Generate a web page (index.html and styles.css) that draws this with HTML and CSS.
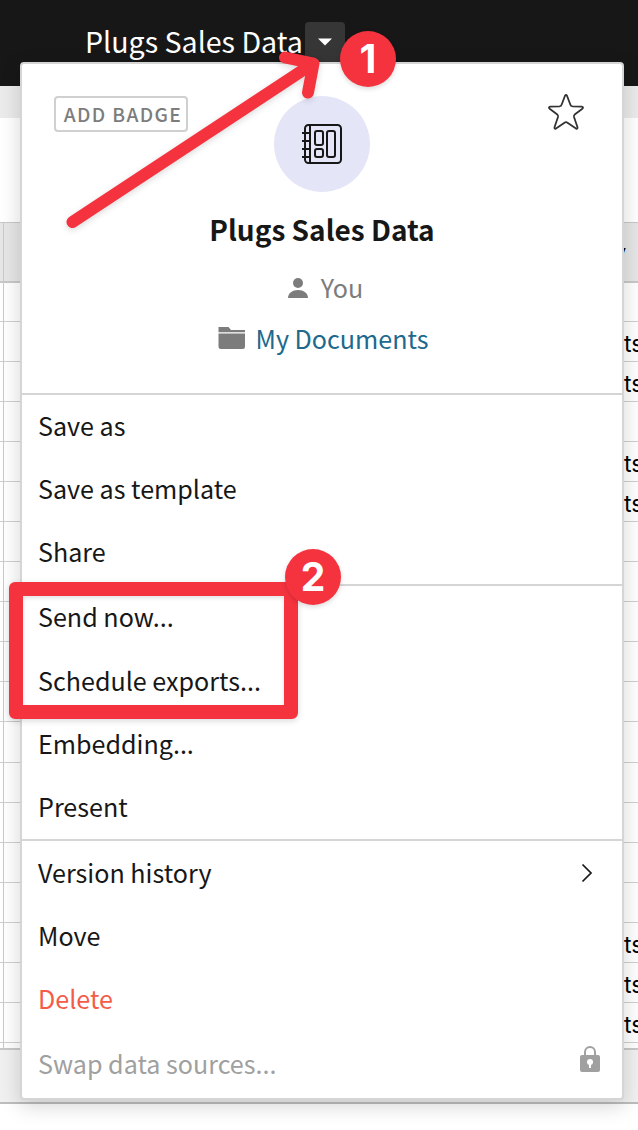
FILE: index.html
```html
<!DOCTYPE html>
<html lang="en">
<head>
<meta charset="utf-8">
<title>Plugs Sales Data</title>
<link rel="stylesheet" href="styles.css">
</head>
<body>
<div class="app">
  <header class="topbar">
    <span class="doc-name">Plugs Sales Data</span>
    <button class="caret" aria-label="Document menu"><svg width="14" height="8" viewBox="0 0 14 8"><path d="M0 .5h14L7 7.5z" fill="#fff"/></svg></button>
  </header>
  <div class="toolbar"></div>
  <div class="blank"></div>
  <div class="sheet">
    <div class="sheet-head"><span>y</span></div>
    <div class="row first"></div>
    <div class="row"><span>ts</span></div>
    <div class="row"><span>ts</span></div>
    <div class="row"></div>
    <div class="row"><span>ts</span></div>
    <div class="row"><span>ts</span></div>
    <div class="row"></div><div class="row"></div><div class="row"></div>
    <div class="row"></div><div class="row"></div><div class="row"></div>
    <div class="row"></div><div class="row"></div><div class="row"></div>
    <div class="row"></div>
    <div class="row"><span>ts</span></div>
    <div class="row"><span>ts</span></div>
    <div class="row"><span>ts</span></div>
  </div>
  <div class="sheet-foot"></div>
</div>

<section class="menu">
  <div class="summary">
    <div class="summary-top">
      <button class="badge">ADD BADGE</button>
      <div class="avatar">
        <svg width="42" height="42" viewBox="0 0 42 42" fill="none" stroke="#171717" stroke-width="2">
          <rect x="4" y="2" width="36" height="38" rx="3.5"/>
          <path d="M9 2v38M1 10h8M1 18h8M1 26h8M1 34h8"/>
          <rect x="14" y="8" width="8" height="14" rx="2"/>
          <rect x="14" y="26" width="8" height="8" rx="2"/>
          <rect x="26" y="8" width="8" height="26" rx="2"/>
        </svg>
      </div>
      <svg class="star" width="38" height="38" viewBox="0 0 38 38" fill="none" stroke="#333" stroke-width="1.800" stroke-linejoin="round"><path d="M18 2.800Q19 1.200 20 2.800L23.300 11.500Q23.800 13.300 25.500 13.400L34.700 13.700Q37 14.200 35.400 15.700L28 21.300Q26.600 22.400 27 24L30.500 34.300Q30.700 36.200 29 35.600L20.500 29.700Q19 28.700 17.500 29.700L9 35.600Q7.300 36.200 7.500 34.300L11 24Q11.400 22.400 10 21.300L2.600 15.700Q1 14.200 3.300 13.700L12.500 13.400Q14.200 13.300 14.700 11.500Z"/></svg>
    </div>
    <h1 class="name">Plugs Sales Data</h1>
    <div class="owner">
      <svg class="person" width="20" height="20" viewBox="0 0 20 20" fill="#7c7c7c"><circle cx="10" cy="5" r="5"/><path d="M0 20c0-5 4.500-8 10-8s10 3 10 8z"/></svg>
      <span>You</span>
    </div>
    <div class="folder">
      <svg width="28" height="22" viewBox="0 0 28 22" fill="#7c7c7c"><path d="M.5 0h10l2.500 3h14v2.200H.5zM.5 6.500h26.500v13q0 2.500-2.500 2.500H3Q.5 22 .5 19.500z"/></svg>
      <span>My Documents</span>
    </div>
  </div>
  <div class="group">
    <div class="item"><span>Save as</span></div>
    <div class="item"><span>Save as template</span></div>
    <div class="item"><span>Share</span></div>
  </div>
  <div class="group">
    <div class="item tall"><span>Send now...</span></div>
    <div class="item"><span>Schedule exports...</span></div>
    <div class="item"><span>Embedding...</span></div>
    <div class="item"><span>Present</span></div>
  </div>
  <div class="group manage">
    <div class="item"><span>Version history</span>
      <svg class="chevron" width="12" height="20" viewBox="0 0 12 20" fill="none" stroke="#171717" stroke-width="1.700"><path d="M1.500 1.500L10 10l-8.500 8.500"/></svg></div>
    <div class="item"><span>Move</span></div>
    <div class="item danger"><span>Delete</span></div>
    <div class="item disabled"><span>Swap data sources...</span>
      <svg class="lock" width="20" height="26" viewBox="0 0 20 26"><path d="M5 10V6.200a5 5.200 0 0 1 10 0V10" fill="none" stroke="#a0a0a0" stroke-width="2"/><rect y="9" width="20" height="17" rx="2" fill="#a0a0a0"/><circle cx="10" cy="16" r="3" fill="#fff"/><path d="M9 17h2v5H9z" fill="#fff"/></svg></div>
  </div>
</section>

<svg class="arrow" width="290" height="210" viewBox="50 40 290 210" fill="none" stroke="#f5333f" stroke-width="12" stroke-linecap="round" stroke-linejoin="round"><path d="M72.500 222L313 63.500M285 57.500L313.500 63.500L308 92.500"/></svg>
<div class="highlight"></div>
<div class="step one">1</div>
<div class="step two">2</div>
</body>
</html>
```
FILE: styles.css
```css
* { box-sizing: border-box; }
body {
  margin: 0;
  width: 638px;
  height: 1130px;
  overflow: hidden;
  position: relative;
  background: #fff;
  color: #171717;
  font-family: "Noto Sans CJK SC", sans-serif;
}
svg { display: block; flex: none; }
button { font: inherit; padding: 0; border: 0; background: none; }
.topbar {
  height: 86px;
  padding: 22px 0 0 85px;
  background: #171717;
  color: #fff;
  display: flex;
  align-items: flex-start;
}
.doc-name { width: 220px; font-size: 28.600px; line-height: 38px; font-weight: 400; white-space: nowrap; }
.caret {
  width: 40px;
  height: 46px;
  border-radius: 4px;
  background: #363636;
  display: flex;
  justify-content: center;
  padding-top: 16px;
}
.toolbar { height: 32px; background: #ebebeb; }
.blank { height: 104px; }
.sheet { height: 826px; position: relative; }
.sheet::before { content: ""; position: absolute; left: 3px; top: 0; bottom: 0; width: 1px; background: #c8c8c8; z-index: 1; }
.sheet-head {
  height: 61px;
  border-top: 1px solid #c8c8c8;
  border-bottom: 2px solid #c8c8c8;
  background: #e6e6e6;
  padding-left: 612px;
  font: 600 24px/60px Inter, sans-serif;
  color: #000;
}
.row {
  height: 40.050px;
  border-bottom: 1px solid #cfcfcf;
  padding-left: 624px;
  font: 400 23px/44px Inter, sans-serif;
  color: #000;
  white-space: nowrap;
}
.row.first { height: 39px; }
.sheet-foot {
  height: 56px;
  border-top: 2px solid #c8c8c8;
  border-bottom: 2px solid #bdbdbd;
  background: #f0f0f0;
}
.menu {
  position: absolute;
  left: 20px;
  top: 62px;
  width: 604px;
  height: 1038px;
  border: 2px solid #d5d5d5;
  border-radius: 4px;
  background: #fff;
  box-shadow: 0 6px 20px rgba(0, 0, 0, .17);
}
.summary { height: 329px; display: flex; flex-direction: column; align-items: center; }
.summary-top { width: 100%; height: 128px; padding: 32px 36px 0 32px; display: flex; align-items: flex-start; }
.badge {
  width: 134px;
  height: 36px;
  flex: none;
  padding-left: 4px;
  border: 2px solid #d0d0d0;
  border-radius: 4px;
  font-size: 19.200px;
  line-height: 32px;
  font-weight: 500;
  letter-spacing: 1.350px;
  color: #7c7c7c;
  white-space: nowrap;
}
.avatar {
  margin: 0 177px 0 86px;
  width: 96px;
  height: 96px;
  border-radius: 50%;
  background: #e5e5f8;
  display: flex;
  flex: none;
  align-items: center;
  justify-content: center;
}
.star { margin-top: -3px; }
.name { margin: 17px 0 0; font-size: 28px; line-height: 40px; font-weight: 600; }
.owner, .folder { display: flex; align-items: center; font-size: 25.100px; line-height: 40px; color: #7c7c7c; }
.owner { gap: 13px; margin-top: 18px; margin-left: 7px; }
.person { margin-top: 2px; }
.folder { gap: 10px; margin-top: 11px; margin-left: 2px; }
.folder span { color: #20698c; }
.group { border-top: 2px solid #d5d5d5; }
.item {
  height: 63px;
  padding: 0 21px 4px 16px;
  display: flex;
  align-items: center;
  justify-content: space-between;
  font-size: 25.100px;
  line-height: 38px;
}
.item.tall { height: 64px; }
.manage { padding-top: 1px; }
.danger { color: #f45b49; }
.disabled { color: #a0a0a0; height: 67px; padding-right: 22px; }
.chevron { margin: 2px 8px 0 0; }
.lock { margin-top: -7px; }
.arrow { position: absolute; left: 50px; top: 40px; filter: drop-shadow(0 2px 3px rgba(0, 0, 0, .15)); }
.highlight {
  position: absolute;
  left: 9px;
  top: 582px;
  width: 289px;
  height: 137px;
  border: 14px solid #f5333f;
  border-radius: 6px;
  box-shadow: 0 2px 6px rgba(0, 0, 0, .15), inset 0 2px 4px rgba(0, 0, 0, .12);
}
.step {
  position: absolute;
  width: 56px;
  height: 56px;
  border-radius: 50%;
  background: #f5333f;
  color: #fff;
  text-align: center;
  font: 700 39px/55px Inter, sans-serif;
  box-shadow: 0 2px 5px rgba(0, 0, 0, .15);
}
.one { left: 340px; top: 31px; }
.two { left: 285px; top: 549px; }
```
